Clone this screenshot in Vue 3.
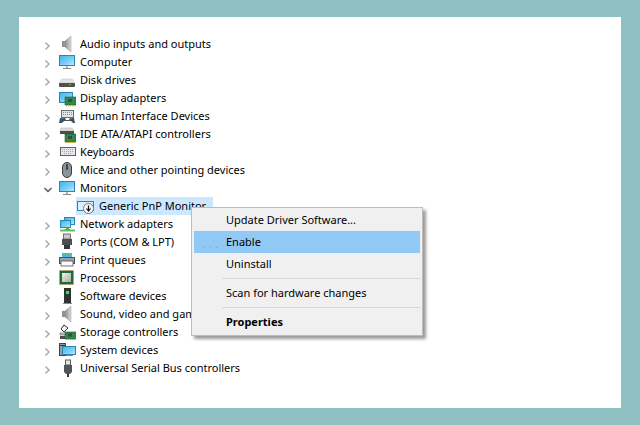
<script setup>
const rows = [
  { label: 'Audio inputs and outputs', icon: 'speaker' },
  { label: 'Computer', icon: 'monitor' },
  { label: 'Disk drives', icon: 'disk' },
  { label: 'Display adapters', icon: 'display' },
  { label: 'Human Interface Devices', icon: 'hid' },
  { label: 'IDE ATA/ATAPI controllers', icon: 'ide' },
  { label: 'Keyboards', icon: 'keyboard' },
  { label: 'Mice and other pointing devices', icon: 'mouse' },
  { label: 'Monitors', icon: 'monitor', open: true },
  { label: 'Generic PnP Monitor', icon: 'generic', child: true },
  { label: 'Network adapters', icon: 'network' },
  { label: 'Ports (COM & LPT)', icon: 'port' },
  { label: 'Print queues', icon: 'printer' },
  { label: 'Processors', icon: 'cpu' },
  { label: 'Software devices', icon: 'software' },
  { label: 'Sound, video and game controllers', icon: 'speaker' },
  { label: 'Storage controllers', icon: 'storage' },
  { label: 'System devices', icon: 'system' },
  { label: 'Universal Serial Bus controllers', icon: 'usb' }
]
</script>

<template>
  <div class="page">
    <svg class="defs" width="0" height="0">
      <defs>
        <linearGradient id="scr" x1="0" y1="0" x2="1" y2="1">
          <stop offset="0" stop-color="#3fb4ee"/>
          <stop offset=".6" stop-color="#7ed0f6"/>
          <stop offset="1" stop-color="#c8ecfb"/>
        </linearGradient>
        <linearGradient id="cone" x1="0" y1="0" x2="1" y2="0">
          <stop offset="0" stop-color="#8c8c8c"/>
          <stop offset="1" stop-color="#dcdcdc"/>
        </linearGradient>
        <linearGradient id="chip" x1="0" y1="0" x2="1" y2="1">
          <stop offset="0" stop-color="#f2f2ea"/>
          <stop offset="1" stop-color="#a9aba2"/>
        </linearGradient>
      </defs>
    </svg>
    <div class="panel">
      <div class="tree">
        <div v-for="r in rows" :key="r.label" class="row" :class="{ child: r.child }">
          <svg v-if="!r.child" class="chev" width="10" height="10" viewBox="0 0 10 10">
            <path v-if="r.open" d="M1.5 3l3.5 3.5L8.5 3" fill="none" stroke="#555" stroke-width="1.4"/>
            <path v-else d="M2.5 1.5L6 5 2.5 8.5" fill="none" stroke="#a6a6a6" stroke-width="1.4"/>
          </svg>
          <div class="cell">
            <svg class="ico" width="18" height="18" viewBox="0 0 18 18">
              <g v-if="r.icon === 'speaker'">
                <rect x="4" y="6" width="3" height="6" fill="#8f8f8f"/>
                <path d="M7 6l6-5v16l-6-5z" fill="url(#cone)" stroke="#9a9a9a" stroke-width=".5"/>
              </g>
              <g v-else-if="r.icon === 'monitor'">
                <rect x="1.5" y="2.5" width="15" height="10" fill="url(#scr)" stroke="#2a86b8"/>
                <rect x="8" y="13" width="2" height="2" fill="#b5b5b5"/>
                <rect x="5" y="15" width="8" height="1" fill="#8a8a8a"/>
              </g>
              <g v-else-if="r.icon === 'disk'">
                <path d="M4 8h10l3 4H1z" fill="#e2e2e2" stroke="#bdbdbd" stroke-width=".5"/>
                <rect x="1" y="12" width="16" height="4" rx="1" fill="#4f4f4f"/>
                <rect x="11" y="13" width="2" height="1" fill="#46d846"/>
              </g>
              <g v-else-if="r.icon === 'display'">
                <rect x="1.5" y="3.5" width="13" height="10" fill="url(#scr)" stroke="#2a86b8"/>
                <rect x="7" y="8" width="11" height="8" fill="#2f8a4a" stroke="#235c35" stroke-width=".6"/>
                <rect x="10" y="10" width="4" height="3" fill="#3c4a3f"/>
                <path d="M8 17h9" stroke="#c9a63a" stroke-dasharray="1 1"/>
              </g>
              <g v-else-if="r.icon === 'hid'">
                <rect x="3.5" y="3.5" width="12" height="7" fill="#dfe3e6" stroke="#6b6f73"/>
                <path d="M5 5.5h9M5 7.5h9" stroke="#8f9498" stroke-dasharray="1 1"/>
                <path d="M1 16l1-5h5l1 2h3l1-2h4l1 5h-2l-2-2H6l-2 2z" fill="#46515a"/>
                <rect x="4" y="11" width="1" height="1" fill="#4aa3e0"/>
                <rect x="13" y="11" width="1" height="1" fill="#4aa3e0"/>
              </g>
              <g v-else-if="r.icon === 'ide'">
                <path d="M3 3h11l2 3H2z" fill="#dedede" stroke="#aaa" stroke-width=".5"/>
                <rect x="2" y="6" width="14" height="3" fill="#4d4d4d"/>
                <rect x="7" y="9" width="11" height="8" fill="#2f8a4a" stroke="#235c35" stroke-width=".6"/>
                <rect x="10" y="11" width="4" height="3" fill="#3c4a3f"/>
                <path d="M8 17.5h9" stroke="#c9a63a" stroke-dasharray="1 1"/>
              </g>
              <g v-else-if="r.icon === 'keyboard'">
                <rect x="2.5" y="4.5" width="15" height="8" fill="#e4e8ec" stroke="#5d6368"/>
                <path d="M4 6.5h12M4 8.5h12M6 10.5h8" stroke="#a4aab0" stroke-dasharray="1 1"/>
              </g>
              <g v-else-if="r.icon === 'mouse'">
                <rect x="4.5" y="1.5" width="9" height="15" rx="4.5" fill="#8a949b" stroke="#3d3d3d"/>
                <rect x="8" y="3" width="2" height="6" rx="1" fill="#3d4347"/>
              </g>
              <g v-else-if="r.icon === 'generic'">
                <rect x=".5" y="4.5" width="16" height="9" fill="#dceffa" stroke="#3f7e9e"/>
                <circle cx="11.5" cy="11.5" r="5" fill="#f7f7f7" stroke="#777"/>
                <path d="M11.5 8.5v5M9.5 11.5l2 2.5 2-2.5" fill="none" stroke="#111" stroke-width="1.2"/>
              </g>
              <g v-else-if="r.icon === 'network'">
                <rect x="6.5" y="2.5" width="10" height="7" fill="url(#scr)" stroke="#2a86b8"/>
                <rect x="2.5" y="5.5" width="10" height="7" fill="url(#scr)" stroke="#2a86b8"/>
                <path d="M2 15.5h15" stroke="#5cc35c" stroke-width="2"/>
                <path d="M9.5 12.5l3 2.5h-6z" fill="#3aa840"/>
              </g>
              <g v-else-if="r.icon === 'port'">
                <rect x="5.5" y="1" width="7" height="5" fill="#c8c8c8" stroke="#555" stroke-width=".8"/>
                <rect x="4" y="6" width="10" height="6" fill="#4b4f52"/>
                <rect x="6" y="12" width="6" height="4" fill="#35383a"/>
              </g>
              <g v-else-if="r.icon === 'printer'">
                <rect x="4" y="2" width="10" height="4" fill="#4db8e8"/>
                <rect x="7" y="2" width="4" height="3" fill="#5cc35c"/>
                <rect x="1.5" y="6.5" width="15" height="6" fill="#9ca2a6" stroke="#4d4f51"/>
                <rect x="3" y="10" width="12" height="5" fill="#fbfbfb" stroke="#555" stroke-width=".8"/>
              </g>
              <g v-else-if="r.icon === 'cpu'">
                <rect x="1.5" y="1.5" width="14" height="14" fill="#1f6b3c" stroke="#c5a34e" stroke-dasharray="1 1"/>
                <rect x="2" y="2" width="13" height="13" fill="#1f6b3c"/>
                <rect x="4" y="4" width="9" height="9" fill="url(#chip)"/>
              </g>
              <g v-else-if="r.icon === 'software'">
                <rect x="6" y="1" width="7" height="15" fill="#2f3133"/>
                <rect x="8" y="4" width="3" height="3" fill="#35e04a"/>
                <rect x="5" y="16" width="9" height="1" fill="#8a8a8a"/>
              </g>
              <g v-else-if="r.icon === 'storage'">
                <path d="M6 2l4 3-4 4-3-3z" fill="#f2f2f2" stroke="#333"/>
                <path d="M2 10h7v2H2z" fill="#d0d0d0" stroke="#555" stroke-width=".6"/>
                <rect x="2" y="13" width="7" height="3" fill="#4d4d4d"/>
                <rect x="7" y="9" width="11" height="7" fill="#2f8a4a" stroke="#235c35" stroke-width=".6"/>
                <rect x="10" y="10.5" width="4" height="3" fill="#3c4a3f"/>
                <path d="M8 16.5h9" stroke="#c9a63a" stroke-dasharray="1 1"/>
              </g>
              <g v-else-if="r.icon === 'system'">
                <rect x="1.5" y="2.5" width="6" height="12" fill="#9c9c9c" stroke="#444"/>
                <rect x="2" y="4" width="5" height="1" fill="#333"/>
                <rect x="4.5" y="5.5" width="13" height="8" fill="url(#scr)" stroke="#2a86b8"/>
                <rect x="8" y="14" width="7" height="1" fill="#7a8a94"/>
              </g>
              <g v-else-if="r.icon === 'usb'">
                <rect x="7.5" y="1" width="5" height="5" fill="#e8e8e8" stroke="#5a5a5a"/>
                <path d="M6 6h8v7l-2 2h-4l-2-2z" fill="#4f575c"/>
                <rect x="9" y="15" width="2" height="3" fill="#3a3a3a"/>
              </g>
            </svg>
            <span class="label">{{ r.label }}</span>
          </div>
        </div>
      </div>
      <div class="menu">
        <div class="item">Update Driver Software...</div>
        <div class="item hover">
          <svg class="dots" width="16" height="1" viewBox="0 0 16 1">
            <path d="M0 .5h1M7 .5h1M13 .5h1" stroke="#6aa8e0"/>
          </svg>
          Enable
        </div>
        <div class="item">Uninstall</div>
        <div class="sep"></div>
        <div class="item">Scan for hardware changes</div>
        <div class="sep"></div>
        <div class="item bold">Properties</div>
      </div>
    </div>
  </div>
</template>

<style scoped>
.page {
  width: 640px;
  height: 425px;
  box-sizing: border-box;
  padding: 17px 19px;
  background: #8fc1c2;
  font-family: "Noto Sans", sans-serif;
  font-size: 11px;
  color: #000;
  overflow: hidden;
}
.defs { position: absolute; }
.panel {
  position: relative;
  height: 391px;
  background: #fff;
  padding-top: 18px;
  box-sizing: border-box;
}
.row {
  height: 18px;
  display: flex;
  align-items: center;
  padding-left: 24px;
  white-space: nowrap;
}
.row.child { padding-left: 57px; }
.chev { margin: 4px 5px 0 0; flex: none; }
.cell { display: flex; align-items: center; height: 18px; }
.child .cell {
  width: 136px;
  padding-left: 1px;
  background: #cce8ff;
}
.ico { margin-right: 4px; flex: none; }
.label { line-height: 18px; }
.menu {
  position: absolute;
  left: 172px;
  top: 190px;
  width: 232px;
  height: 129px;
  box-sizing: border-box;
  background: #f0f0f0;
  border: 1px solid #bdbdbd;
  box-shadow: 3px 3px 3px rgba(0,0,0,.4);
  padding: 1px 2px;
}
.item {
  position: relative;
  height: 22px;
  line-height: 22px;
  padding-left: 32px;
}
.item.hover { background: #90c8f6; }
.dots { position: absolute; left: 9px; top: 16px; }
.bold { font-weight: 700; }
.sep {
  height: 1px;
  margin: 3px 0 3px 28px;
  background: #d7d7d7;
}
</style>
